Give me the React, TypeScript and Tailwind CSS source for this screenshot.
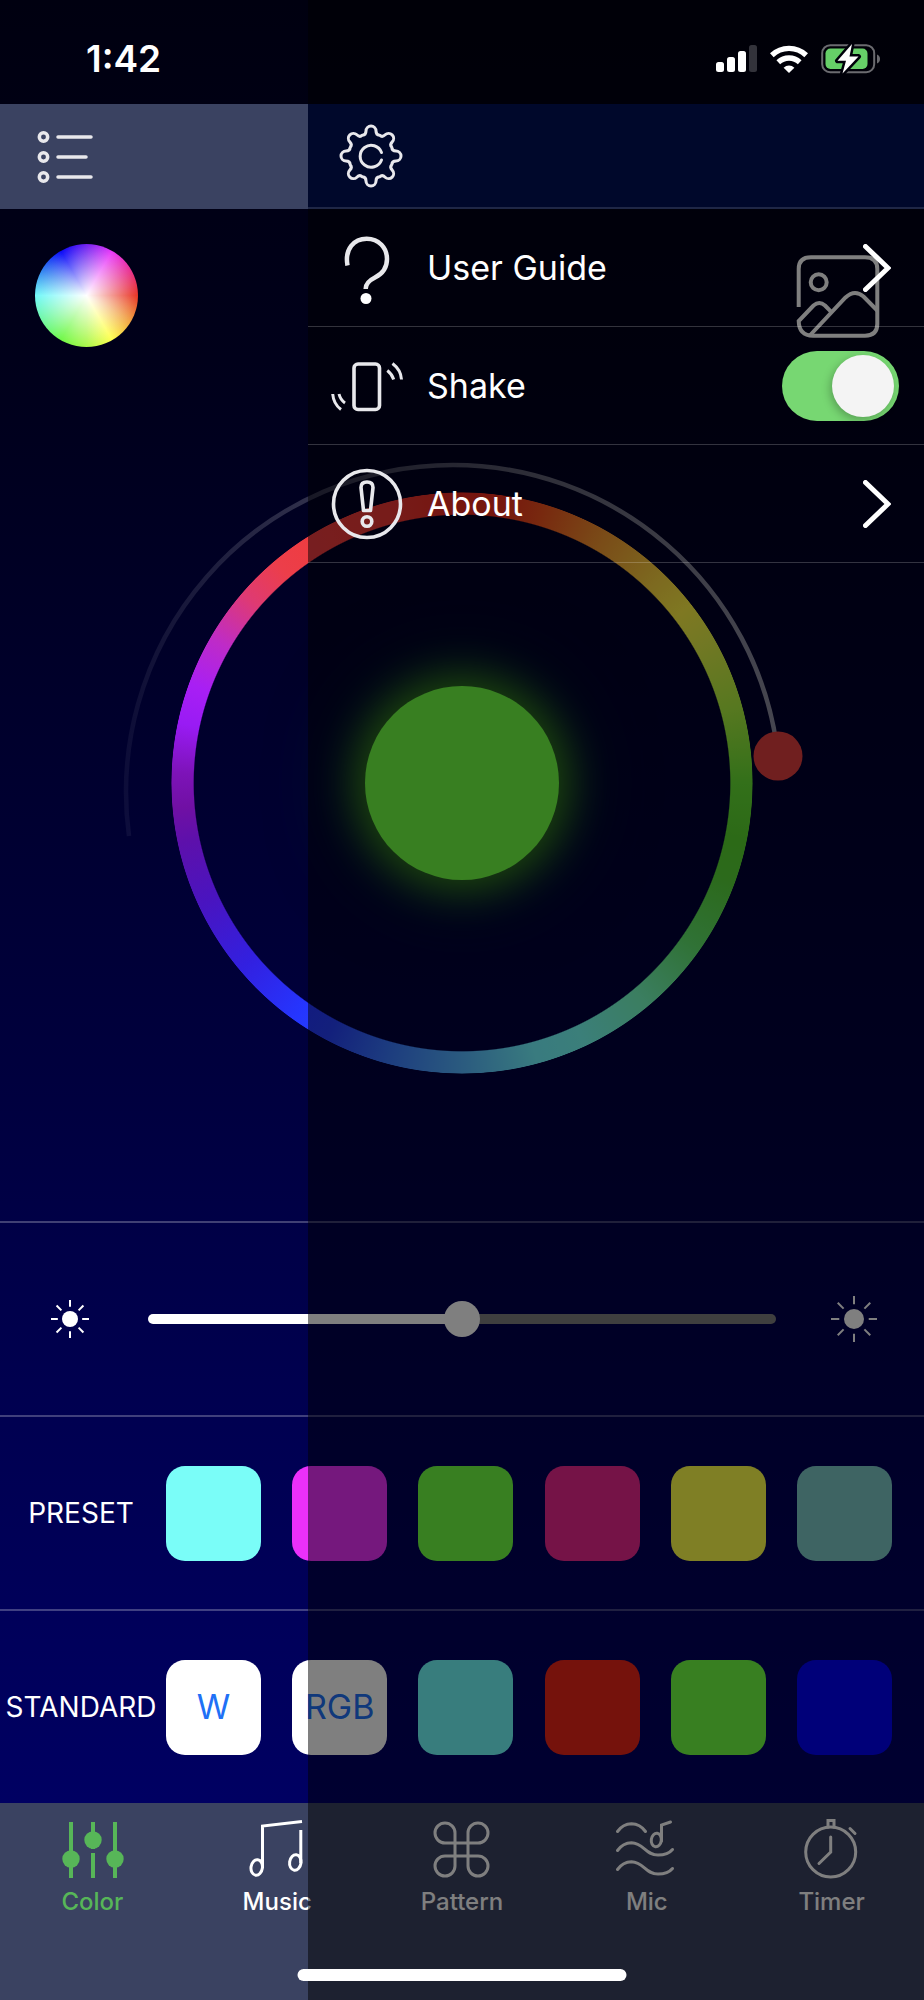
import React, { useState } from "react"

const presets = [
    { name: "Cyan", color: "bg-[#7afdf8]" },
    { name: "Magenta", color: "bg-[#eb30fa]" },
    { name: "Green", color: "bg-[#70fe43]" },
    { name: "Pink", color: "bg-[#ea268e]" },
    { name: "Yellow", color: "bg-[#fefe4a]" },
    { name: "Teal", color: "bg-[#7cc8c6]" }
]

const standards = [
    { name: "White", color: "bg-white", text: "W" },
    { name: "RGB cycle", color: "bg-white", text: "RGB" },
    { name: "Aqua", color: "bg-[#70fafa]" },
    { name: "Red", color: "bg-[#ea2518]" },
    { name: "Green", color: "bg-[#70fe43]" },
    { name: "Blue", color: "bg-[#0000f2]" }
]

// Eight rounded teeth around a 64x64 box
const gearPath = () => {
    const at = (deg: number, u: number, v: number) => {
        const a = (deg * Math.PI) / 180
        const x = 32 + u * Math.cos(a) + v * Math.sin(a)
        const y = 32 + u * Math.sin(a) - v * Math.cos(a)
        return `${x.toFixed(2)} ${y.toFixed(2)}`
    }
    let d = `M${at(0, -8.6, 20.8)}`
    for (let k = 0; k < 8; k++) {
        const a = k * 45
        d += `Q${at(a, -5, 21)} ${at(a, -5, 25)}A5 5 0 0 1 ${at(a, 5, 25)}Q${at(a, 5, 21)} ${at(a, 8.6, 20.8)}`
    }
    return d + "Z"
}

const StatusBar = () => (
    <div className="relative z-20 flex h-[104px] items-center justify-between pt-[13px] pl-[86px] pr-[43px]">
        <span className="text-[37px] leading-10 font-semibold">1:42</span>
        <div className="flex items-center gap-[13px]">
            <svg className="w-[41px] h-[28px]" viewBox="0 0 41 28" fill="#fff">
                <rect x="0" y="17" width="8" height="10" rx="2.5" />
                <rect x="11" y="12" width="8" height="15" rx="2.5" />
                <rect x="22" y="6" width="8" height="21" rx="2.5" />
                <rect x="33" y="0" width="8" height="27" rx="2.5" fill="#33333b" />
            </svg>
            <svg className="w-[38px] h-[28px]" viewBox="0 0 38 28" fill="none" stroke="#fff" strokeWidth="5.4">
                <path d="M1.8 10.2a25 25 0 0 1 34.4 0" />
                <path d="M8.3 17.2a15.6 15.6 0 0 1 21.4 0" />
                <path d="M13.6 22.7a8 8 0 0 1 10.8 0L19 28z" fill="#fff" stroke="none" />
            </svg>
            <svg className="w-[60px] h-[30px]" viewBox="0 0 60 30">
                <rect x="1.2" y="1.2" width="52" height="27" rx="8" fill="none" stroke="#6b6b70" strokeWidth="2" />
                <path d="M56 10.5c4 1.5 4 7.5 0 9z" fill="#6b6b70" />
                <rect x="4.5" y="4.5" width="42" height="20.5" rx="5" fill="#66cf68" />
                <path d="M31 0 16.5 16.8h8.5L21.5 29.5 37.5 12.5h-9z" fill="#fff" stroke="#00000a" strokeWidth="5" strokeLinejoin="round" />
                <path d="M31 0 16.5 16.8h8.5L21.5 29.5 37.5 12.5h-9z" fill="#fff" />
            </svg>
        </div>
    </div>
)

const Sun = ({ ray, core }: { ray: number; core: number }) => (
    <svg className="w-11 h-11 shrink-0 overflow-visible" viewBox="-22 -22 44 44" stroke="#fff" strokeWidth="2">
        <circle r={core} fill="#fff" stroke="none" />
        {[0, 45, 90, 135, 180, 225, 270, 315].map((a) => (
            <path key={a} d={`M0 ${-ray}v${ray * 0.36}`} transform={`rotate(${a})`} />
        ))}
    </svg>
)

const Dial = () => (
    <div className="relative mx-auto mt-[145px] w-[582px] h-[582px] flex items-center justify-center">
        <div className="absolute inset-0 rounded-full bg-[conic-gradient(#ea2a1e_0deg,#ec2e1c_8deg,#f0501e_16deg,#f49830_30deg,#fad440_44deg,#fef044_52deg,#e4f048_60deg,#acf040_75deg,#66e034_90deg,#58d42e_102deg,#58d438_110deg,#60e46c_125deg,#76fcc0_140deg,#76fef4_155deg,#72f6ff_165deg,#56b6ff_180deg,#3a7aff_195deg,#2640f8_208deg,#2536ff_215deg,#3220e0_230deg,#4914c0_245deg,#5d10ab_258deg,#7010a4_265deg,#7d13b8_272deg,#991bf4_282deg,#a81ff4_290deg,#be2bc8_300deg,#df3a72_311deg,#ec3e4a_320deg,#f03c3c_332deg,#ee3834_345deg,#ea2a1e_360deg)] [mask:radial-gradient(closest-side,transparent_92%,black_92.4%,black_99.7%,transparent)]" />
        <svg className="absolute inset-0 overflow-visible" viewBox="0 0 582 582" fill="none">
            <defs>
                <linearGradient id="arc" gradientUnits="userSpaceOnUse" x1="-46" y1="0" x2="607" y2="0">
                    <stop offset="0" stopColor="#fff" stopOpacity="0.05" />
                    <stop offset="0.5" stopColor="#fff" stopOpacity="0.3" />
                    <stop offset="1" stopColor="#fff" stopOpacity="0.55" />
                </linearGradient>
            </defs>
            <path d="M-42 344A327 327 0 0 1 282 -27A327 327 0 0 1 605.5 252" stroke="url(#arc)" strokeWidth="4.5" />
            <circle cx="607" cy="264" r="24.5" fill="#e03e3e" />
        </svg>
        <button aria-label="Power" className="relative w-[194px] h-[194px] rounded-full bg-[#70fe43] shadow-[0_0_40px_10px_#3c8a1c,0_0_80px_14px_#042a2c]" />
    </div>
)

const Swatches = ({ label, items }: { label: string; items: { name: string; color: string; text?: string }[] }) => (
    <div className="flex h-[194px] items-center border-t-2 border-white/25 pr-8">
        <h2 className="w-[166px] shrink-0 pr-1 text-center text-[28px] leading-9">{label}</h2>
        <div className="flex flex-1 justify-between">
            {items.map((item) => (
                <button key={item.name} aria-label={item.name} className={`w-[95px] h-[95px] rounded-[19px] text-[34px] leading-10 text-[#2070f6] ${item.color}`}>
                    {item.text}
                </button>
            ))}
        </div>
    </div>
)

const tabs = [
    {
        label: "Color",
        icon: (
            <g strokeWidth="4">
                <path d="M11 3v56M33 3v27M33 34v25M55 3v56" />
                <g fill="currentColor" stroke="none">
                    <circle cx="11" cy="40" r="8.7" />
                    <circle cx="33" cy="21" r="8.7" />
                    <circle cx="55" cy="40" r="8.7" />
                </g>
            </g>
        )
    },
    {
        label: "Music",
        icon: (
            <g>
                <path d="M17.5 49V7L57 2.5M55.8 11v33" />
                <ellipse cx="11.7" cy="48.5" rx="5.7" ry="7.8" transform="rotate(8 11.7 48.5)" />
                <ellipse cx="50.3" cy="43.5" rx="5.7" ry="7.8" transform="rotate(8 50.3 43.5)" />
            </g>
        )
    },
    {
        label: "Pattern",
        icon: <path d="M38 14v33a10 10 0 1 0 10-10H15a10 10 0 1 0 10 10V14a10 10 0 1 0-10 10h33a10 10 0 1 0-10-10" />
    },
    {
        label: "Mic",
        icon: (
            <g strokeLinecap="round">
                <path d="M2.5 12.5Q8 5 16.5 4.8Q25 5 30.5 12.5" />
                <path d="M2.5 31.5Q8 24 16.5 23.8C29 24 30 36 43 36Q53 36 57.5 30.5" />
                <path d="M2.5 50.5Q8 43 16.5 42.8C29 43 30 55 43 55Q53 55 57.5 49.5" />
                <path d="M46.5 22V6L55.5 3" />
                <ellipse cx="41.3" cy="21" rx="5" ry="6.8" transform="rotate(8 41.3 21)" />
            </g>
        )
    },
    {
        label: "Timer",
        icon: (
            <g strokeLinecap="round">
                <circle cx="30.7" cy="33" r="25" />
                <path d="M28 8V1.5h6V8M50 9.5l5 5M30.7 18v15L19 44.5" />
            </g>
        )
    }
]

const Chevron = () => (
    <svg className="w-7 h-12 mr-2" viewBox="0 0 28 48" fill="none" stroke="#fff" strokeWidth="5" strokeLinecap="round">
        <path d="M2.5 2.5 25 24 2.5 45.5" />
    </svg>
)

const MenuIcon = ({ children }: { children: React.ReactNode }) => (
    <svg className="w-[72px] h-[72px] shrink-0" viewBox="0 0 72 72" fill="none" stroke="#e8e8ec" strokeWidth="3.6">
        {children}
    </svg>
)

const SettingsPanel = () => {
    const [shake, setShake] = useState(true)
    const row = "flex w-full h-[118px] items-center gap-6 border-b border-white/20 pl-[23px] pr-[25px] text-[34px] leading-10 text-left"

    return (
        <aside className="absolute inset-y-0 right-0 z-10 w-2/3 bg-black/50 pt-[104px]">
            <div className="flex h-[105px] items-center border-b-2 border-[#1f2746] bg-[#00082b] pl-[31px]">
                <button aria-label="Settings">
                    <svg className="w-16 h-16" viewBox="0 0 64 64" fill="none" stroke="#e8e8ec" strokeWidth="3" strokeLinejoin="round">
                        <path d={gearPath()} />
                        <path d="M42.5 28.5a11 11 0 1 0 0 7.5" strokeLinecap="round" />
                    </svg>
                </button>
            </div>
            <button className={row}>
                <MenuIcon>
                    <path d="M16.5 33.5C13.5 17 23 6.8 35.7 6.8 48 6.8 56 16 56 27 56 37 51 42 44 45.5 38 48.5 34.5 51.5 34.7 57" strokeWidth="4.5" />
                    <circle cx="35" cy="66.5" r="5.5" fill="#fff" stroke="none" />
                </MenuIcon>
                <span className="flex-1">User Guide</span>
                <Chevron />
            </button>
            <label className={row}>
                <MenuIcon>
                    <rect x="23" y="14" width="25.5" height="45.5" rx="4" />
                    <path d="M56.3 20.5Q61 24 62.7 29.5M61.5 13.5Q70 20 70.5 29.5M8 44Q9.5 50 14 53M1.7 44Q2.5 54 10 59.5" strokeWidth="3" />
                </MenuIcon>
                <span className="flex-1">Shake</span>
                <input
                    type="checkbox"
                    role="switch"
                    checked={shake}
                    onChange={(e) => setShake(e.target.checked)}
                    className="flex h-[70px] w-[117px] appearance-none items-center rounded-full bg-[#555] px-[5px] before:h-[62px] before:w-[62px] before:rounded-full before:bg-[#f4f4f4] before:shadow-[-2px_3px_8px_rgba(0,0,0,0.25)] checked:justify-end checked:bg-[#77d772]"
                />
            </label>
            <button className={row}>
                <MenuIcon>
                    <circle cx="36" cy="36" r="33.5" />
                    <path d="M30 19.5Q30 14 36 14T42 19.5L39.5 42.5H32.5Z" strokeLinejoin="round" />
                    <circle cx="36" cy="53.5" r="4.8" />
                </MenuIcon>
                <span className="flex-1">About</span>
                <Chevron />
            </button>
        </aside>
    )
}

export default function App() {
    const [brightness, setBrightness] = useState(50)

    return (
        <div className="relative flex min-h-screen flex-col overflow-hidden bg-[linear-gradient(#000010_0%,#00001a_18%,#00002c_36%,#00003e_54%,#000050_70%,#000062_90%)] font-[Inter,'Liberation_Sans',sans-serif] text-white">
            <StatusBar />

            <header className="flex h-[105px] items-center bg-[#3a4261] pl-[37px]">
                <button aria-label="Groups">
                    <svg className="w-14 h-14" viewBox="0 0 56 56" fill="none" stroke="#e8e8ec" strokeWidth="3.5">
                        {[8, 28, 48].map((y) => (
                            <circle key={y} cx="6.5" cy={y} r="4.2" />
                        ))}
                        <path d="M21 8h33M21 28h28M21 48h33" strokeLinecap="round" />
                    </svg>
                </button>
            </header>

            <main className="flex-1">
                <div className="flex items-center justify-between pt-[35px] pl-[35px] pr-11">
                    <button aria-label="Color wheel" className="w-[103px] h-[103px] rounded-full bg-[radial-gradient(closest-side,#fff,transparent),conic-gradient(#7020f0,#e838f8_30deg,#e83090_60deg,#e83424_90deg,#f0a040_120deg,#ffff50_150deg,#a8f848_180deg,#70f848_210deg,#70f8a0_240deg,#70f8f8_270deg,#3080f0_300deg,#0808f8_330deg,#7020f0)]" />
                    <button aria-label="Pick from photo">
                        <svg className="w-[84px] h-[84px]" viewBox="0 0 84 84" fill="none" stroke="#fff" strokeWidth="4">
                            <path d="M2.7 53V15Q2.7 3.3 15 3.3H69Q81.3 3.3 81.3 15V70Q81.3 81.7 69 81.7H17Q3 81.7 2.7 67L17.5 51.5Q23.3 46.5 29 51.5L35 57.7" />
                            <path d="M14.3 81 49.5 43.5Q58.5 35 67.5 42.5L81.3 56.5" />
                            <circle cx="22.7" cy="28.3" r="8" />
                        </svg>
                    </button>
                </div>
                <Dial />
            </main>

            <section className="mt-[146px]">
                <div className="flex h-[194px] items-center gap-14 border-t-2 border-white/25 px-12">
                    <Sun ray={19} core={8} />
                    <input
                        type="range"
                        aria-label="Brightness"
                        value={brightness}
                        onChange={(e) => setBrightness(Number(e.target.value))}
                        style={{ "--fill": `${brightness}%` } as React.CSSProperties}
                        className="h-9 min-w-0 flex-1 appearance-none bg-transparent [&::-webkit-slider-runnable-track]:h-[10px] [&::-webkit-slider-runnable-track]:rounded-full [&::-webkit-slider-runnable-track]:bg-[linear-gradient(to_right,#fff_var(--fill),#7f7f7f_var(--fill))] [&::-webkit-slider-thumb]:-mt-[13px] [&::-webkit-slider-thumb]:h-9 [&::-webkit-slider-thumb]:w-9 [&::-webkit-slider-thumb]:appearance-none [&::-webkit-slider-thumb]:rounded-full [&::-webkit-slider-thumb]:bg-white"
                    />
                    <Sun ray={23} core={10} />
                </div>
                <Swatches label="PRESET" items={presets} />
                <Swatches label="STANDARD" items={standards} />
            </section>

            <nav className="grid h-[197px] grid-cols-5 items-start bg-[#3a4261] pt-4">
                {tabs.map((tab, i) => (
                    <button key={tab.label} className={`flex flex-col items-center gap-[5px] ${i === 0 ? "text-[#57b658]" : "text-white"}`}>
                        <svg className="w-16 h-16" viewBox="0 0 64 64" fill="none" stroke="currentColor" strokeWidth="3">
                            {tab.icon}
                        </svg>
                        <span className="text-[24px] leading-7 font-medium">{tab.label}</span>
                    </button>
                ))}
            </nav>

            <SettingsPanel />

            {/* Home indicator */}
            <div className="absolute bottom-[19px] left-1/2 z-20 h-3 w-[329px] -translate-x-1/2 rounded-full bg-white" />
        </div>
    )
}
